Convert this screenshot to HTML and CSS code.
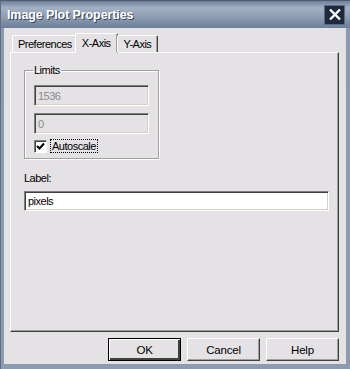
FILE: index.html
```html
<!DOCTYPE html>
<html>
<head>
<meta charset="utf-8">
<link rel="stylesheet" href="styles.css">
</head>
<body>
<div class="window">
  <div class="titlebar">
    <span class="title">Image Plot Properties</span>
    <span class="close"><svg width="14" height="13" viewBox="0 0 14 13"><path d="M2 1.5 L12 11.5 M12 1.5 L2 11.5" stroke="#fff" stroke-width="2.4"/></svg></span>
  </div>
  <div class="body">
    <div class="tabs">
      <div class="tab">Preferences</div>
      <div class="tab active">X-Axis</div>
      <div class="tab last">Y-Axis</div>
    </div>
    <div class="panel">
      <fieldset class="group">
        <legend>Limits</legend>
        <div class="field disabled">1536</div>
        <div class="field disabled">0</div>
        <label class="check"><span class="box"><svg width="9" height="9" viewBox="0 0 9 9"><path d="M1 4 L3.5 6.5 L8 1.5" stroke="#000" stroke-width="2" fill="none"/></svg></span><span class="focus">Autoscale</span></label>
      </fieldset>
      <div class="lbl">Label:</div>
      <div class="field wide">pixels</div>
    </div>
    <div class="buttons">
      <div class="btn default">OK</div>
      <div class="btn">Cancel</div>
      <div class="btn">Help</div>
    </div>
  </div>
</div>
</body>
</html>
```
FILE: styles.css
```css
html, body { margin: 0; padding: 0; }
body {
  width: 350px; height: 369px; overflow: hidden;
  font-family: "Liberation Sans", Arial, sans-serif;
  font-size: 11px;
  letter-spacing: -0.5px;
  color: #000;
  background: #8796ae;
}
.window {
  width: 350px; height: 369px; box-sizing: border-box;
  display: flex; flex-direction: column;
  border-left: 1px solid #5f6d83;
  border-top: 1px solid #4f5c70;
  background: linear-gradient(to bottom, #a9b6c8 0px, #8b9ab2 28px, #8d9bb1 100%);
}
.titlebar {
  height: 27px; flex: none;
  display: flex; align-items: center; justify-content: space-between;
  padding: 0 5px 0 6px;
  background: linear-gradient(to bottom, #6f7f98 0%, #a4b1c4 25%, #8e9db4 60%, #6d7d96 100%);
}
.title {
  color: #fff; font-weight: bold; font-size: 12.5px;
  letter-spacing: -0.1px;
  text-shadow: 1px 1px 0 #3a4558;
}
.close {
  width: 19px; height: 18px; display: flex; align-items: center; justify-content: center;
  background: #1d2a3d;
  border: 1px solid #5b6a82;
}
.body {
  flex: 1;
  margin: 0 4px 5px 3px;
  background: #e4e2e4;
  display: flex; flex-direction: column;
  padding: 5px 7px 0 6px;
}
.tabs { display: flex; align-items: flex-end; height: 19px; flex: none; padding-left: 2px; position: relative; z-index: 1; }
.tab {
  height: 17px; box-sizing: border-box;
  padding: 2px 4px 0 5px;
  border-top: 1px solid #fff; border-left: 1px solid #fff;
  border-right: 1px solid #404040;
  box-shadow: inset -1px 0 0 #a0a0a0;
  border-top-left-radius: 2px; border-top-right-radius: 2px;
  color: #000;
}
.tab.active {
  height: 20px; padding-top: 3px;
  margin: 0 -1px 0 -2px; padding-left: 6px; padding-right: 6px;
  background: #e4e2e4;
  border-bottom: 1px solid #e4e2e4;
  margin-bottom: -1px;
}
.tab.last { padding-left: 6px; padding-right: 6px; }
.panel {
  height: 280px; flex: none; box-sizing: border-box;
  border-top: 1px solid #fff; border-left: 1px solid #fff;
  border-right: 1px solid #404040; border-bottom: 1px solid #404040;
  box-shadow: inset -1px -1px 0 #a0a0a0;
  padding: 11px 13px 0 13px;
}
.group {
  margin: 0; width: 134px; box-sizing: border-box; height: 95px;
  border: 1px solid #a0a0a0;
  box-shadow: 1px 1px 0 #fff, inset 1px 1px 0 #fff;
  padding: 0 9px 0 9px;
}
.group legend { padding: 0 1px; margin-left: -1px; color: #000; }
.field {
  box-sizing: border-box; height: 21px;
  border-top: 1px solid #808080; border-left: 1px solid #808080;
  border-right: 1px solid #fff; border-bottom: 1px solid #fff;
  box-shadow: inset 1px 1px 0 #404040, inset -1px -1px 0 #d4d0c8;
  padding: 4px 0 0 3px;
}
.field.disabled { width: 115px; color: #8a8a8a; margin-top: 9px; margin-bottom: 7px; background: #e4e2e4; }
.field.disabled + .field.disabled { margin-top: 0; margin-bottom: 5px; }
.check { display: flex; align-items: center; gap: 3px; }
.box {
  width: 13px; height: 13px; box-sizing: border-box;
  border-top: 1px solid #808080; border-left: 1px solid #808080;
  border-right: 1px solid #fff; border-bottom: 1px solid #fff;
  box-shadow: inset 1px 1px 0 #404040;
  background: #fff; display: flex; align-items: center; justify-content: center;
}
.focus { border: 1px dotted #000; padding: 0 1px; }
.lbl { margin-top: 13px; margin-bottom: 7px; }
.field.wide { width: 305px; background: #fff; height: 20px; padding-top: 3px; }
.buttons { display: flex; justify-content: flex-end; gap: 6px; padding: 6px 0 0 0; }
.btn {
  width: 73px; height: 23px; box-sizing: border-box;
  display: flex; align-items: center; justify-content: center;
  border-top: 1px solid #fff; border-left: 1px solid #fff;
  border-right: 1px solid #404040; border-bottom: 1px solid #404040;
  box-shadow: inset -1px -1px 0 #a0a0a0;
  font-size: 11.5px; letter-spacing: -0.2px;
}
.btn.default { border: 1px solid #000; box-shadow: inset 1px 1px 0 #fff, inset -2px -2px 0 #404040; }
```
